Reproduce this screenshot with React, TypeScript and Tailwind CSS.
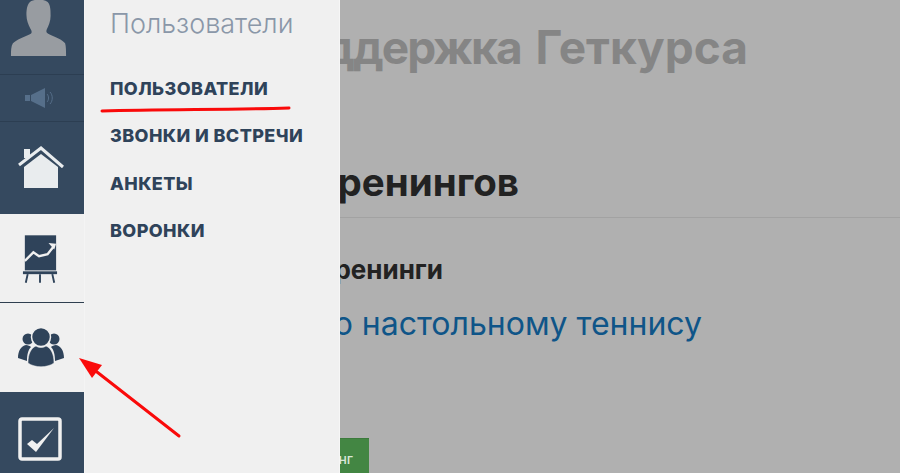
const submenu = ["ПОЛЬЗОВАТЕЛИ", "ЗВОНКИ И ВСТРЕЧИ", "АНКЕТЫ", "ВОРОНКИ"];

function AvatarIcon() {
  return (
    <svg width="58" height="57" viewBox="0 0 60 58" fill="#989ca1" preserveAspectRatio="none">
      <path d="M22 1c5-2 13-2 17 1 3 3 3 9 3 14 0 6-2 10-4 14-1 3 0 4 3 5 6 3 13 5 16 9 1 3 1 8 1 13H1c0-5 0-10 2-13 4-4 11-6 17-9 3-1 3-3 1-6-2-4-4-8-4-14 0-6 1-12 5-14z" />
    </svg>
  );
}

function SpeakerIcon() {
  return (
    <svg width="28" height="20" viewBox="0 0 28 20">
      <rect x="0" y="7" width="5" height="6" fill="#566f8a" />
      <path d="M6 7l14-7v20L6 13z" fill="#566f8a" />
      <path d="M22 6c2 2 2 6 0 8M25 4c3 3 3 9 0 12" fill="none" stroke="#566f8a" strokeWidth="1" />
    </svg>
  );
}

function HomeIcon() {
  return (
    <svg width="46" height="44" viewBox="0 0 46 44">
      <rect x="6" y="3" width="6" height="9" fill="#e9ecee" />
      <path d="M1 19L23 2l22 19" fill="none" stroke="#e9ecee" strokeWidth="3" />
      <path d="M6 21L23 8l17 13v21H6z" fill="#e9ecee" />
    </svg>
  );
}

function BoardIcon() {
  return (
    <svg width="36" height="50" viewBox="0 0 38 50">
      <rect x="3" y="0" width="33" height="37" fill="#2f435a" />
      <path d="M3 27l9-9 6 4 9-2 7-9" fill="none" stroke="#f0f0f0" strokeWidth="2.5" />
      <path d="M36 9l-8-1 6 7z" fill="#f0f0f0" />
      <rect x="1" y="38" width="36" height="3" fill="#2f435a" />
      <path d="M6 41l-2 9M19 41v9M32 41l2 9" stroke="#2f435a" strokeWidth="2" />
    </svg>
  );
}

function UsersIcon() {
  return (
    <svg width="46" height="40" viewBox="0 0 46 40" fill="#2f435a">
      <circle cx="10" cy="11" r="5.5" />
      <circle cx="36" cy="11" r="5.5" />
      <path d="M0 30c0-7 3-12 8-13 2 0 4 1 5 2-3 3-4 8-4 14-3-1-6-2-9-3z" />
      <path d="M46 30c0-7-3-12-8-13-2 0-4 1-5 2 3 3 4 8 4 14 3-1 6-2 9-3z" />
      <circle cx="23" cy="9" r="9.5" stroke="#f0f0f0" strokeWidth="1.5" />
      <path d="M10 35c0-9 3-15 8-17 3 2 7 2 10 0 5 2 8 8 8 17-7 5-19 5-26 0z" stroke="#f0f0f0" strokeWidth="0.5" />
    </svg>
  );
}

function CheckIcon() {
  return (
    <svg width="44" height="44" viewBox="0 0 44 44">
      <rect x="2" y="2" width="40" height="40" rx="2" fill="none" stroke="#f0f0f0" strokeWidth="3.5" />
      <path d="M9 27l9 8L36 11l-17 16-5-4z" fill="#f0f0f0" />
    </svg>
  );
}

export default function App() {
  return (
    <div className="relative flex w-[900px] h-[473px] overflow-hidden bg-[#b0b0b0] font-['Inter','Noto_Sans',sans-serif]">
      {/* sidebar and drawer */}
      <nav className="w-[85px] shrink-0 flex flex-col bg-[#f0f0f0] border-r border-[#f4f4f4]">
        <div className="h-[75px] flex items-end justify-center bg-[#35495f] border-b border-[#2c3e52] pb-[17px] pr-[6px]">
          <AvatarIcon />
        </div>
        <div className="h-[47px] flex items-center justify-center bg-[#35495f] border-b border-[#2c3e52] pr-[6px]">
          <SpeakerIcon />
        </div>
        <div className="h-[92px] flex items-center justify-center bg-[#35495f] pr-[3px]">
          <HomeIcon />
        </div>
        <div className="h-[89px] flex items-center justify-center border-b border-[#2f3f50] pr-[5px] pt-[2px]">
          <BoardIcon />
        </div>
        <div className="h-[89px] flex items-center justify-center pr-[3px]">
          <UsersIcon />
        </div>
        <div className="flex-1 flex items-center justify-center bg-[#35495f] pr-[5px] pt-[12px]">
          <CheckIcon />
        </div>
      </nav>
      <aside className="w-[255px] shrink-0 bg-[#f0f0f0] border-r border-[#f6f6f6] pl-[25px] pt-[9px]">
        <div className="text-[27px] leading-[30px] font-light text-[#8a97a8]">Пользователи</div>
        <ul className="mt-[38px] flex flex-col gap-[24.3px]">
          {submenu.map((item) => (
            <li key={item} className="text-[18px] leading-[23px] font-extrabold tracking-[0.4px] text-[#2f435a] whitespace-nowrap">
              {item}
            </li>
          ))}
        </ul>
      </aside>

      {/* page behind the drawer, cut off on its left side */}
      <main className="flex-1 min-w-0 overflow-hidden flex flex-col">
        <div className="w-[408px] mt-[21px] h-[52px] flex justify-end">
          <h1 className="shrink-0 text-[46px] leading-[52px] font-bold [word-spacing:4px] text-[#858585] whitespace-nowrap">
            <span className="tracking-[-2px]">Поддержка</span> Геткурса
          </h1>
        </div>
        <div className="w-[179px] mt-[89px] h-[40px] flex justify-end">
          <h2 className="shrink-0 text-[38.5px] leading-[40px] font-bold text-[#222222] whitespace-nowrap">
            Каталог тренингов
          </h2>
        </div>
        <div className="mt-[15px] border-t border-[#a2a2a2]" />
        <div className="w-[103px] mt-[38px] h-[28px] flex justify-end">
          <h3 className="shrink-0 text-[26px] leading-[28px] font-bold text-[#222222] whitespace-nowrap">
            Мои тренинги
          </h3>
        </div>
        <div className="w-[362px] mt-[20px] h-[40px] flex justify-end">
          <a className="shrink-0 text-[32px] leading-[40px] text-[#0f5588] whitespace-nowrap">
            Тренинг по настольному теннису
          </a>
        </div>
        <div className="w-[29px] mt-[94px] flex justify-end">
          <button className="shrink-0 h-[46px] pl-3 pr-[16px] pb-[6px] bg-[#438643] border-t border-[#3c7a3c] text-[14px] font-medium text-[#d8e6d8] whitespace-nowrap">
            Создать тренинг
          </button>
        </div>
      </main>

      {/* red annotations */}
      <svg className="absolute inset-0 pointer-events-none" width="900" height="473">
        <path d="M102 111c60-2 125-1 187-3" fill="none" stroke="#fa0a0a" strokeWidth="3" strokeLinecap="round" />
        <path d="M179 436L97 372" fill="none" stroke="#fa0a0a" strokeWidth="3" strokeLinecap="round" />
        <path d="M79 358l23 7-10 13z" fill="#fa0a0a" />
      </svg>
    </div>
  );
}
